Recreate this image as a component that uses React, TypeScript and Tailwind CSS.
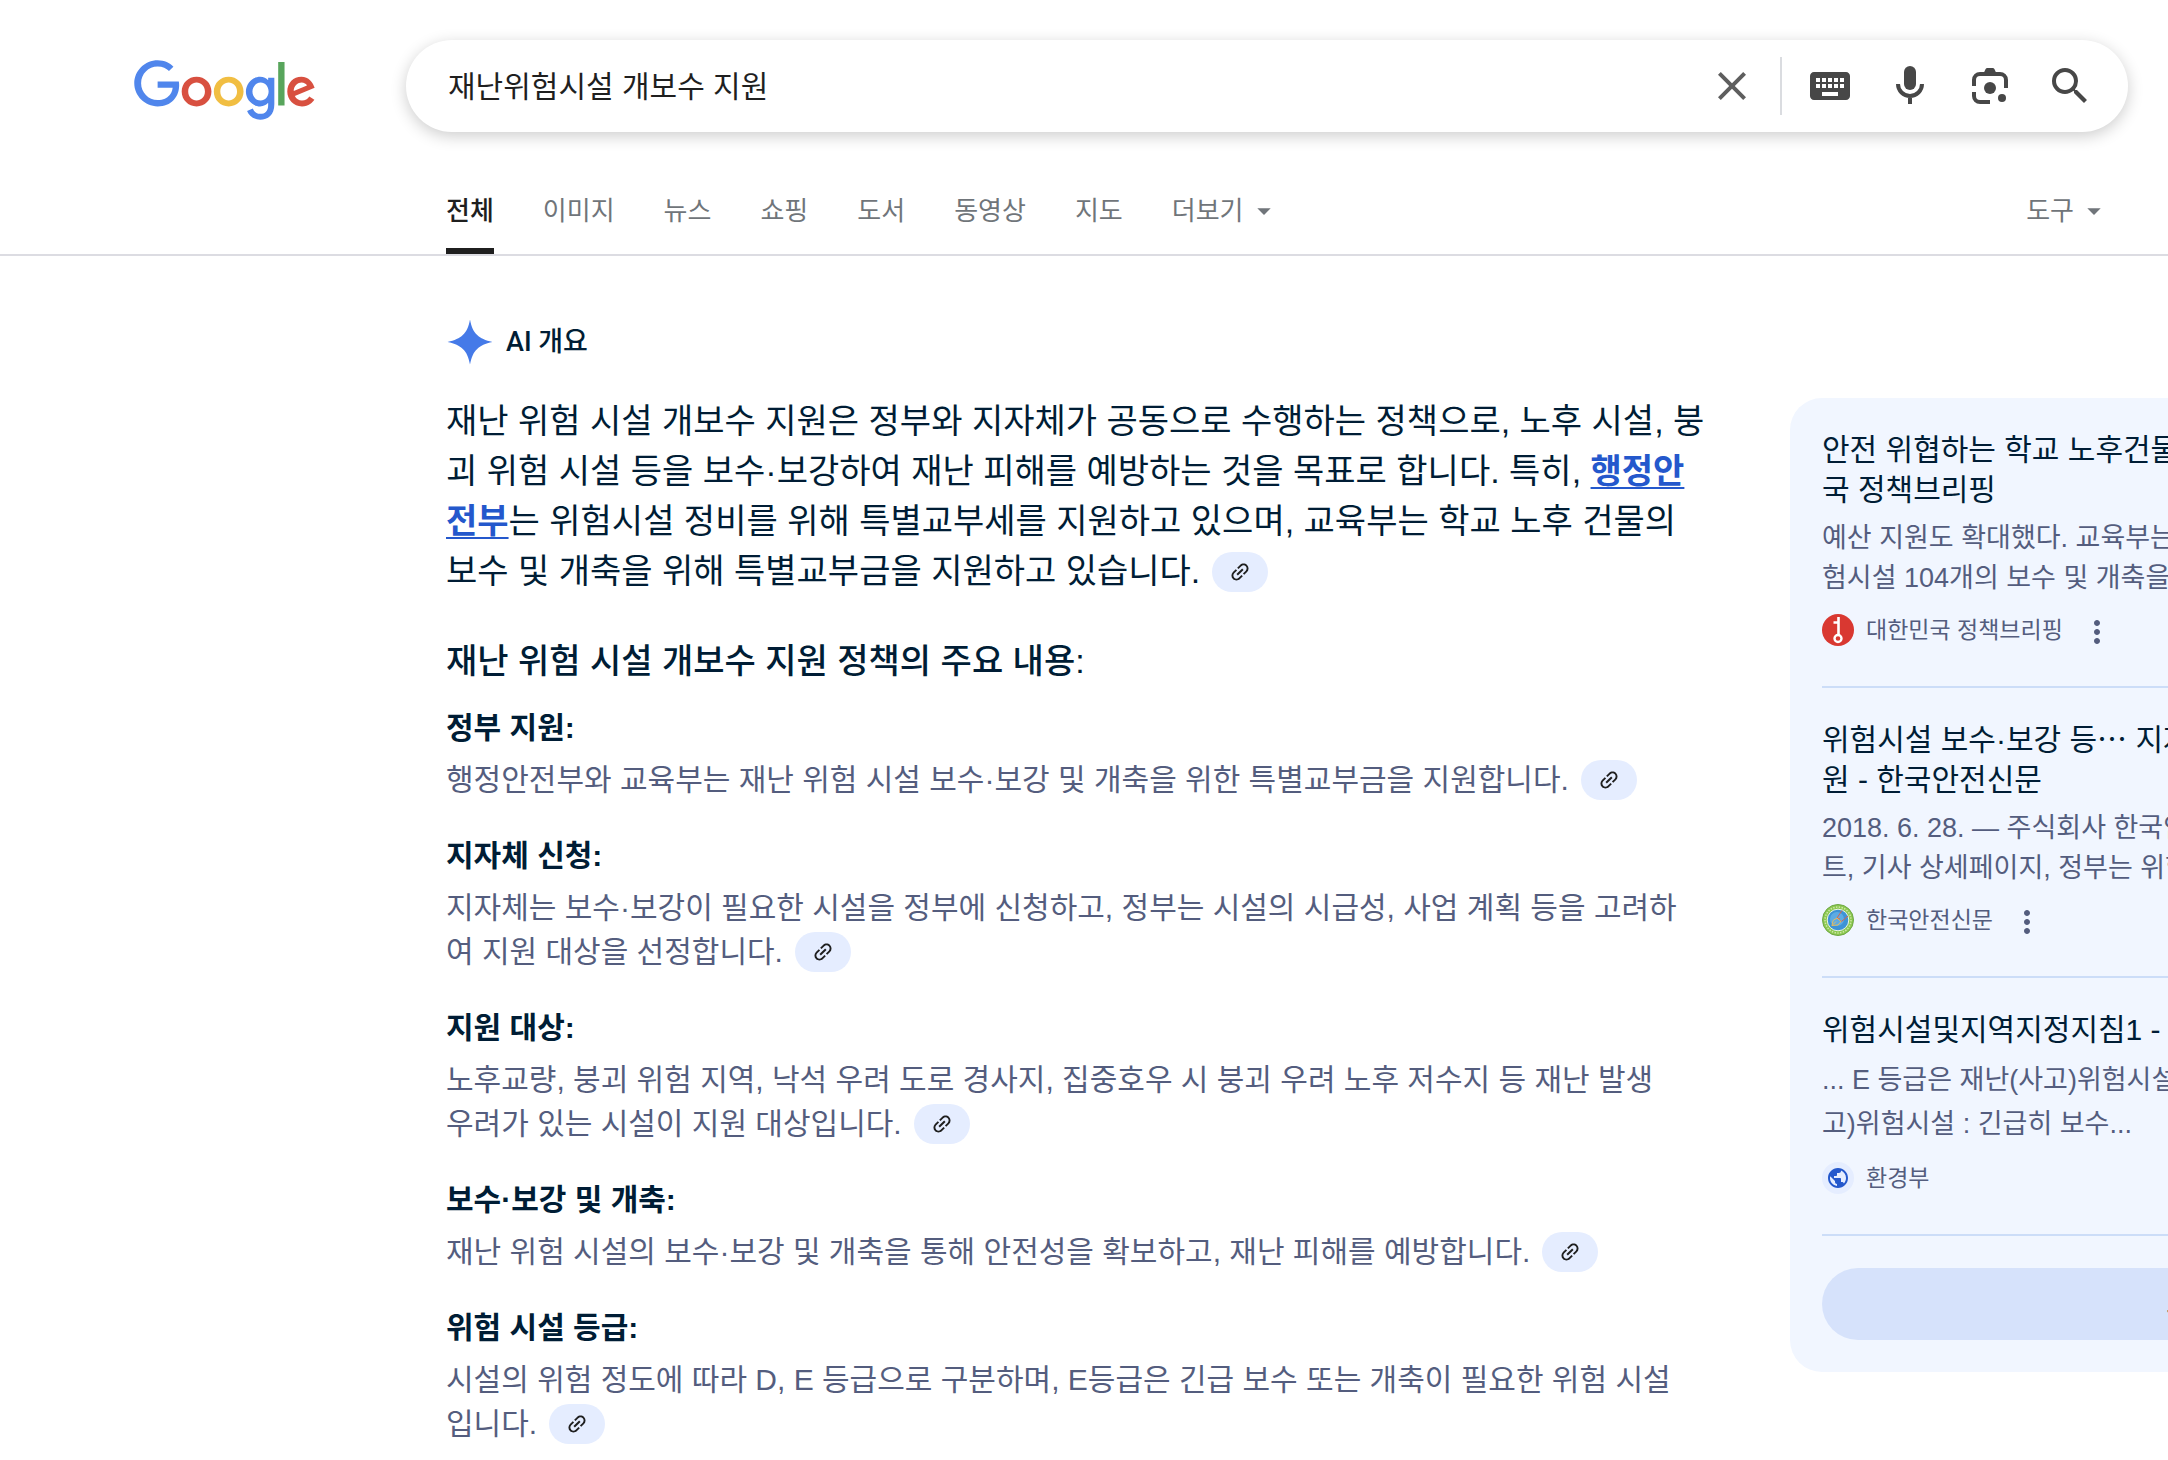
import type { ReactNode } from "react";
import { MdArrowDropDown, MdClose, MdKeyboard, MdLink, MdMoreVert, MdPublic, MdSearch } from "react-icons/md";

const tabs = ["전체", "이미지", "뉴스", "쇼핑", "도서", "동영상", "지도"];

const sections = [
  {
    title: "정부 지원:",
    body: "행정안전부와 교육부는 재난 위험 시설 보수·보강 및 개축을 위한 특별교부금을 지원합니다.",
  },
  {
    title: "지자체 신청:",
    body: "지자체는 보수·보강이 필요한 시설을 정부에 신청하고, 정부는 시설의 시급성, 사업 계획 등을 고려하여 지원 대상을 선정합니다.",
  },
  {
    title: "지원 대상:",
    body: "노후교량, 붕괴 위험 지역, 낙석 우려 도로 경사지, 집중호우 시 붕괴 우려 노후 저수지 등 재난 발생 우려가 있는 시설이 지원 대상입니다.",
  },
  {
    title: "보수·보강 및 개축:",
    body: "재난 위험 시설의 보수·보강 및 개축을 통해 안전성을 확보하고, 재난 피해를 예방합니다.",
  },
  {
    title: "위험 시설 등급:",
    body: "시설의 위험 정도에 따라 D, E 등급으로 구분하며, E등급은 긴급 보수 또는 개축이 필요한 위험 시설입니다.",
  },
];

function GoogleLogo() {
  return (
    <svg viewBox="0 0 272 92" className="w-[182px]" role="img" aria-label="Google">
      <path fill="#d85040" d="M115.75 47.18c0 12.77-9.99 22.18-22.25 22.18s-22.25-9.41-22.25-22.18C71.25 34.32 81.24 25 93.5 25s22.25 9.32 22.25 22.18zm-9.74 0c0-7.98-5.79-13.44-12.51-13.44S80.99 39.2 80.99 47.18c0 7.9 5.79 13.44 12.51 13.44s12.51-5.55 12.51-13.44z" />
      <path fill="#f1be42" d="M163.75 47.18c0 12.77-9.99 22.18-22.25 22.18s-22.25-9.41-22.25-22.18c0-12.85 9.99-22.18 22.25-22.18s22.25 9.32 22.25 22.18zm-9.74 0c0-7.98-5.79-13.44-12.51-13.44s-12.51 5.46-12.51 13.44c0 7.9 5.79 13.44 12.51 13.44s12.51-5.55 12.51-13.44z" />
      <path fill="#5086ec" d="M209.75 26.34v39.82c0 16.38-9.66 23.07-21.08 23.07-10.75 0-17.22-7.19-19.66-13.07l8.48-3.53c1.51 3.61 5.21 7.87 11.17 7.87 7.31 0 11.84-4.51 11.84-13v-3.19h-.34c-2.18 2.69-6.38 5.04-11.68 5.04-11.09 0-21.25-9.66-21.25-22.09 0-12.52 10.16-22.26 21.25-22.26 5.29 0 9.49 2.35 11.68 4.96h.34v-3.61h9.25zm-8.56 20.92c0-7.81-5.21-13.52-11.84-13.52-6.72 0-12.35 5.71-12.35 13.52 0 7.73 5.63 13.36 12.35 13.36 6.63 0 11.84-5.63 11.84-13.36z" />
      <path fill="#58a55c" d="M225 3v65h-9.5V3h9.5z" />
      <path fill="#d85040" d="M262.02 54.48l7.56 5.04c-2.44 3.61-8.32 9.83-18.48 9.83-12.6 0-22.01-9.74-22.01-22.18 0-13.19 9.49-22.18 20.92-22.18 11.51 0 17.14 9.16 18.98 14.11l1.01 2.52-29.65 12.28c2.27 4.45 5.8 6.72 10.75 6.72 4.96 0 8.4-2.44 10.92-6.14zm-23.27-7.98l19.82-8.23c-1.09-2.77-4.37-4.7-8.23-4.7-4.95 0-11.84 4.37-11.59 12.93z" />
      <path fill="#5086ec" d="M35.29 41.41V32H67c.31 1.64.47 3.58.47 5.68 0 7.06-1.93 15.79-8.15 22.01-6.05 6.3-13.78 9.66-24.02 9.66C16.32 69.35.36 53.89.36 34.91.36 15.93 16.32.47 35.3.47c10.5 0 17.98 4.12 23.6 9.49l-6.64 6.64c-4.03-3.78-9.49-6.72-16.97-6.72-13.86 0-24.7 11.17-24.7 25.03 0 13.86 10.84 25.03 24.7 25.03 8.99 0 14.11-3.61 17.39-6.89 2.66-2.66 4.41-6.46 5.1-11.65l-22.49.01z" />
    </svg>
  );
}

function MicIcon() {
  return (
    <svg viewBox="0 0 24 24" className="size-12" fill="none" stroke="currentColor" strokeWidth="2">
      <rect x="9" y="2" width="6" height="12" rx="3" fill="currentColor" stroke="none" />
      <path d="M6 11a6 6 0 0 0 12 0M12 17v4" />
    </svg>
  );
}

function LensIcon() {
  return (
    <svg viewBox="0 0 24 24" className="size-12" fill="none" stroke="currentColor" strokeWidth="2">
      <path d="M4 12V9a3 3 0 0 1 3-3h10a3 3 0 0 1 3 3v4M4 15v2a3 3 0 0 0 3 3h5" />
      <path d="M9 5.200l.8-1.700q.3-.5.8-.5h2.800q.5 0 .8.500L15 5.200z" fill="currentColor" stroke="none" />
      <circle cx="12" cy="13" r="3" fill="currentColor" stroke="none" />
      <circle cx="18" cy="18" r="2" fill="currentColor" stroke="none" />
    </svg>
  );
}

function SparkIcon() {
  return (
    <svg viewBox="0 0 48 48" className="size-12" fill="#457ae8">
      <path d="M24 1.500c1.400 7.500 3.600 12.400 7.200 15.600 3.400 3.200 8 5.400 15.300 6.900-7.300 1.500-11.900 3.700-15.300 6.900-3.600 3.200-5.800 8.100-7.200 15.600-1.400-7.500-3.600-12.400-7.200-15.600C13.400 27.700 8.800 25.500 1.500 24c7.300-1.500 11.900-3.700 15.300-6.900 3.600-3.200 5.800-8.100 7.200-15.600z" />
    </svg>
  );
}

function BriefingIcon() {
  return (
    <svg viewBox="0 0 32 32" className="size-8">
      <circle cx="16" cy="16" r="16" fill="#d93831" />
      <path d="M16.500 3v18M11.500 8.500h5" stroke="#fff" strokeWidth="2.600" fill="none" />
      <circle cx="16" cy="24.500" r="3.500" fill="none" stroke="#fff" strokeWidth="2.400" />
    </svg>
  );
}

function SafetyNewsIcon() {
  return (
    <svg viewBox="0 0 32 32" className="size-8" fill="none">
      <circle cx="16" cy="16" r="15.500" fill="#8cc850" stroke="#6fa845" />
      <circle cx="16" cy="16" r="13" stroke="#cfe8a8" strokeWidth="1.500" strokeDasharray="1.400 1.400" />
      <circle cx="16" cy="16" r="10.800" fill="#3d93d6" stroke="#eef7e4" />
      <circle cx="15" cy="15" r="7" fill="#5cabe4" />
      <path d="M20 6.500l-5 7.500 3 1M26 12l-6.500 5.500-2-2" stroke="#d9634a" />
      <path d="M10 21.500l1-5 4-2.500 4 3.500-3 3.500zl4-4" stroke="#e3bc62" />
    </svg>
  );
}

function GlobeIcon() {
  return (
    <span className="flex size-8 items-center justify-center rounded-full bg-[#e5edff]">
      <MdPublic className="size-6 text-[#2458cc]" />
    </span>
  );
}

function LinkChip() {
  return (
    <button
      type="button"
      aria-label="관련 링크 보기"
      className="-mt-1 ml-3 inline-flex h-10 w-14 items-center justify-center rounded-full bg-[#e5edff] align-middle text-[#1f1f1f]"
    >
      <MdLink className="size-6 -rotate-45" />
    </button>
  );
}

type SourceCardProps = {
  title: ReactNode;
  body: ReactNode;
  icon: ReactNode;
  source: string;
  bodyClassName?: string;
  hasMenu?: boolean;
};

function SourceCard({ title, body, icon, source, bodyClassName = "leading-10", hasMenu = false }: SourceCardProps) {
  return (
    <article className="mb-8 border-b-2 border-[#ccddf8] pb-10">
      <h3 className="text-[30px] leading-10 text-[#001d35]">{title}</h3>
      <p className={`mt-2 text-[27px] text-[#545d7e] ${bodyClassName}`}>{body}</p>
      <div className="mt-4 flex h-8 items-center text-[#545d7e]">
        {icon}
        <span className="ml-3 text-[23px]">{source}</span>
        {hasMenu ? (
          <button type="button" aria-label="메뉴" className="mt-1 ml-4">
            <MdMoreVert className="size-9" />
          </button>
        ) : null}
      </div>
    </article>
  );
}

export default function App() {
  return (
    <div className="min-h-screen overflow-hidden bg-white pb-3 font-['Liberation_Sans','Noto_Sans_CJK_KR',sans-serif] text-[#1f1f1f]">
      <header className="border-b-2 border-[#dcdce2]">
        <div className="flex pt-10 pr-10">
          <a href="#" className="w-[406px] shrink-0 pt-5 pl-[134px]">
            <GoogleLogo />
          </a>
          <form className="flex h-[92px] flex-1 items-center rounded-full bg-white pr-[34px] pl-[42px] text-[#474747] shadow-[0_4px_16px_rgba(0,0,0,0.2)]">
            <input
              type="text"
              aria-label="검색"
              defaultValue="재난위험시설 개보수 지원"
              className="min-w-0 flex-1 text-[30px] text-[#1f1f1f] outline-none"
            />
            <button type="button" aria-label="지우기" className="text-[#5e5e5e]">
              <MdClose className="size-12" />
            </button>
            <span className="mx-6 h-[58px] w-0.5 bg-[#dadce0]" />
            <div className="flex gap-8">
              <button type="button" aria-label="입력 도구">
                <MdKeyboard className="size-12" />
              </button>
              <button type="button" aria-label="음성 검색">
                <MicIcon />
              </button>
              <button type="button" aria-label="이미지로 검색">
                <LensIcon />
              </button>
              <button type="submit" aria-label="검색">
                <MdSearch className="size-12" />
              </button>
            </div>
          </form>
        </div>

        <nav className="mt-9 flex h-[86px] justify-between pr-[58px] pl-[446px] text-[26px] text-[#70757a]">
          <div className="flex gap-[49px]">
            {tabs.map((tab, i) => (
              <a
                key={tab}
                href="#"
                className={
                  i === 0
                    ? "flex items-center border-b-6 border-[#1f1f1f] pt-1.5 font-medium text-[#1f1f1f]"
                    : "flex items-center"
                }
              >
                {tab}
              </a>
            ))}
            <button type="button" className="flex items-center gap-1">
              더보기
              <MdArrowDropDown className="size-8" />
            </button>
          </div>
          <button type="button" className="flex items-center gap-1">
            도구
            <MdArrowDropDown className="size-8" />
          </button>
        </nav>
      </header>

      <main className="flex items-start gap-20 pl-[446px] text-[#001d35]">
        <section className="w-[1264px] shrink-0 pt-[62px]">
          <h1 className="flex items-center gap-3 font-['Roboto','Noto_Sans_CJK_KR',sans-serif] text-[27px] font-medium">
            <SparkIcon />
            AI 개요
          </h1>

          <p className="mt-[30px] text-[34px] leading-[50px]">
            재난 위험 시설 개보수 지원은 정부와 지자체가 공동으로 수행하는 정책으로, 노후 시설, 붕괴 위험 시설 등을
            보수·보강하여 재난 피해를 예방하는 것을 목표로 합니다. 특히,{" "}
            <a href="#" className="font-bold text-[#2458cc] underline decoration-2 underline-offset-4 [text-decoration-skip-ink:none]">
              행정안전부
            </a>
            는 위험시설 정비를 위해 특별교부세를 지원하고 있으며, 교육부는 학교 노후 건물의 보수 및 개축을 위해
            특별교부금을 지원하고 있습니다.
            <LinkChip />
          </p>

          <h2 className="mt-10 text-[34px] leading-[50px] font-medium">재난 위험 시설 개보수 지원 정책의 주요 내용:</h2>

          <div className="mt-5 space-y-8 pr-6 text-[30px] leading-[44px]">
            {sections.map((section) => (
              <div key={section.title}>
                <h3 className="font-bold">{section.title}</h3>
                <p className="mt-2 text-[#545d7e]">
                  {section.body}
                  <LinkChip />
                </p>
              </div>
            ))}
          </div>
        </section>

        {/* runs past the right edge of the window */}
        <aside className="mt-[142px] w-[856px] shrink-0 rounded-4xl bg-[#f1f6ff] p-8">
          <SourceCard
            title={<>안전 위협하는 학교 노후건물<br />국 정책브리핑</>}
            body={<>예산 지원도 확대했다. 교육부는<br />험시설 104개의 보수 및 개축을</>}
            icon={<BriefingIcon />}
            source="대한민국 정책브리핑"
            hasMenu
          />
          <SourceCard
            title={<>위험시설 보수·보강 등⋯ 지자<br />원 - 한국안전신문</>}
            body={<>2018. 6. 28. — 주식회사 한국안<br />트, 기사 상세페이지, 정부는 위험</>}
            icon={<SafetyNewsIcon />}
            source="한국안전신문"
            hasMenu
          />
          <SourceCard
            title="위험시설및지역지정지침1 -"
            body={<>... E 등급은 재난(사고)위험시설로<br />고)위험시설 : 긴급히 보수...</>}
            bodyClassName="leading-[44px]"
            icon={<GlobeIcon />}
            source="환경부"
          />
          <button type="button" className="h-[72px] w-full rounded-full bg-[#d6e2fb] text-[26px] font-medium">
            모두 보기
          </button>
        </aside>
      </main>
    </div>
  );
}
